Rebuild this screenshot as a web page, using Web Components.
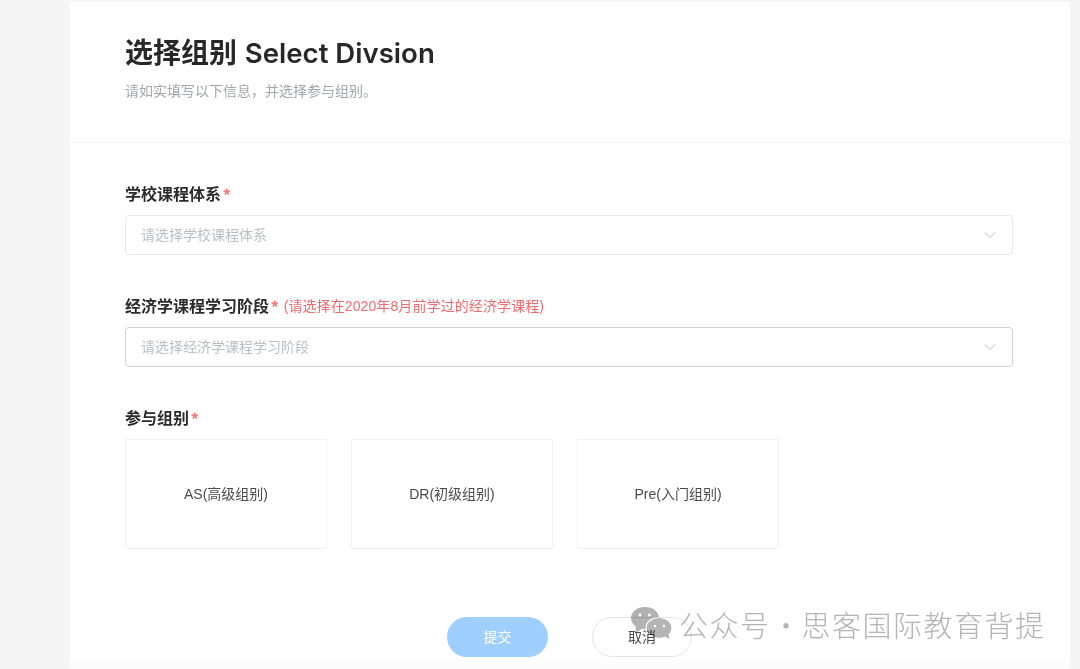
<!DOCTYPE html>
<html lang="zh-CN"><head><meta charset="utf-8">
<style>
html,body{margin:0;height:100%;overflow:hidden;background:#f5f5f6}
body{font-family:"Liberation Sans","Noto Sans CJK SC",sans-serif;color:#2b2b2e}
</style></head><body>
<template id="t-page"><style>
:host{display:block;position:relative;width:1080px;height:669px;box-sizing:border-box;padding:2px 10px 0 70px;overflow:hidden;filter:blur(.4px)}
.card{background:#fff;height:100%;display:flex;flex-direction:column}
.fade{position:absolute;left:70px;right:10px;bottom:0;height:12px;background:linear-gradient(#fff0,#fafafa)}
</style><div class="card"><slot></slot></div><div class="fade"></div><slot name="over"></slot></template>

<template id="t-head"><style>
:host{display:block;height:141px;box-sizing:border-box;padding:32px 55px 0;border-bottom:1px solid #f1f1f6}
h1{margin:0;font-size:28px;line-height:38px;font-weight:700;color:#28282b}
p{margin:8px 0 0;font-size:14px;line-height:20px;color:#a3a6ad}
</style><h1><slot name="title"></slot></h1><p><slot name="sub"></slot></p></template>

<template id="t-field"><style>
:host{display:block;margin:40px 57px 0 55px}
.lab{display:flex;align-items:center;height:20px;margin-bottom:12px;font-size:16px;font-weight:700;color:#2b2b2e;white-space:nowrap}
.s{color:#f7777a;margin-left:1.500px;font:700 17px/20px "Noto Sans CJK SC",sans-serif;padding-top:3px}
.h{font-size:14px;font-weight:400;color:#f5696c;margin-left:4.500px;letter-spacing:.1px}
</style><div class="lab"><slot name="label"></slot><span class="s">*</span><span class="h"><slot name="hint"></slot></span></div><slot></slot></template>

<template id="t-select"><style>
:host{display:flex;align-items:center;justify-content:space-between;height:40px;box-sizing:border-box;padding:0 16px 2px 15px;border:1px solid #e6e6ee;border-radius:4px;font-size:14px;color:#bcbec6;background:#fff}
:host([active]){border-color:#d0d0da}
svg{width:12px;height:8px;fill:none;stroke:#d3d3da;stroke-width:1.1;margin-top:2px}
</style><span><slot></slot></span><svg viewBox="0 0 12 8"><path d="M1 1.5 6 6.5 11 1.5"/></svg></template>

<template id="t-options"><style>
:host{display:flex;gap:24px}
</style><slot></slot></template>

<template id="t-option"><style>
:host{display:flex;align-items:center;justify-content:center;width:202px;height:110px;box-sizing:border-box;padding-bottom:2px;border:1px solid #f0f0f6;border-radius:2px;font-size:14px;color:#4a4a4d}
</style><slot></slot></template>

<template id="t-actions"><style>
:host{display:flex;gap:44px;margin:68px 0 0 377px}
</style><slot></slot></template>

<template id="t-btn"><style>
:host{display:flex;align-items:center;justify-content:center;width:101px;height:40px;box-sizing:border-box;padding-bottom:2px;border-radius:20px;font-size:14px;background:#9fcfff;color:#fff}
:host([plain]){width:100px;background:#fff;border:1px solid #e4e4ea;color:#4a4a4d}
</style><slot></slot></template>

<template id="t-mark"><style>
:host{position:absolute;left:631px;top:605px;display:flex;align-items:center;gap:7px;color:#b4b4b4;font-size:29px;line-height:38px;letter-spacing:1.5px;white-space:nowrap;font-family:"Noto Sans CJK SC",sans-serif;font-weight:300;mix-blend-mode:multiply}
svg{width:41px;height:32px;display:block;margin-top:-3px}
.dot{display:inline-block;width:31px;text-align:center;letter-spacing:0}
</style><svg viewBox="0 0 41 32"><ellipse cx="14" cy="11" rx="14" ry="11" fill="#b2b2b2"/><path d="M5 18 4.500 26 12 21Z" fill="#b2b2b2"/><circle cx="9" cy="8" r="1.4" fill="#fff"/><circle cx="18.500" cy="8" r="1.4" fill="#fff"/><ellipse cx="28" cy="21" rx="13" ry="10.500" fill="#b4b4b4" stroke="#fff" stroke-width="1.2"/><path d="M33 29 38.500 32 37 26Z" fill="#b4b4b4"/><circle cx="24" cy="19" r="1.3" fill="#fff"/><circle cx="33" cy="19" r="1.3" fill="#fff"/></svg><span><slot></slot><span class="dot">·</span><slot name="rest"></slot></span></template>

<x-page>
  <x-head><span slot="title">选择组别 <span style="font-family:Inter,'Liberation Sans',sans-serif;font-weight:600;font-size:27.600px">Select Divsion</span></span><span slot="sub">请如实填写以下信息&#xFF0C;并选择参与组别。</span></x-head>
  <x-field><span slot="label">学校课程体系</span><x-select>请选择学校课程体系</x-select></x-field>
  <x-field><span slot="label">经济学课程学习阶段</span><span slot="hint">(请选择在2020年8月前学过的经济学课程)</span><x-select active>请选择经济学课程学习阶段</x-select></x-field>
  <x-field><span slot="label">参与组别</span><x-options><x-option>AS(高级组别)</x-option><x-option>DR(初级组别)</x-option><x-option>Pre(入门组别)</x-option></x-options></x-field>
  <x-actions><x-btn>提交</x-btn><x-btn plain>取消</x-btn></x-actions>
  <x-mark slot="over">公众号<span slot="rest">思客国际教育背提</span></x-mark>
</x-page>
<script>
for (const n of ['page','head','field','select','options','option','actions','btn','mark']) {
  customElements.define('x-'+n, class extends HTMLElement {
    constructor(){super();this.attachShadow({mode:'open'}).appendChild(document.getElementById('t-'+n).content.cloneNode(true));}
  });
}
</script>
</body></html>
